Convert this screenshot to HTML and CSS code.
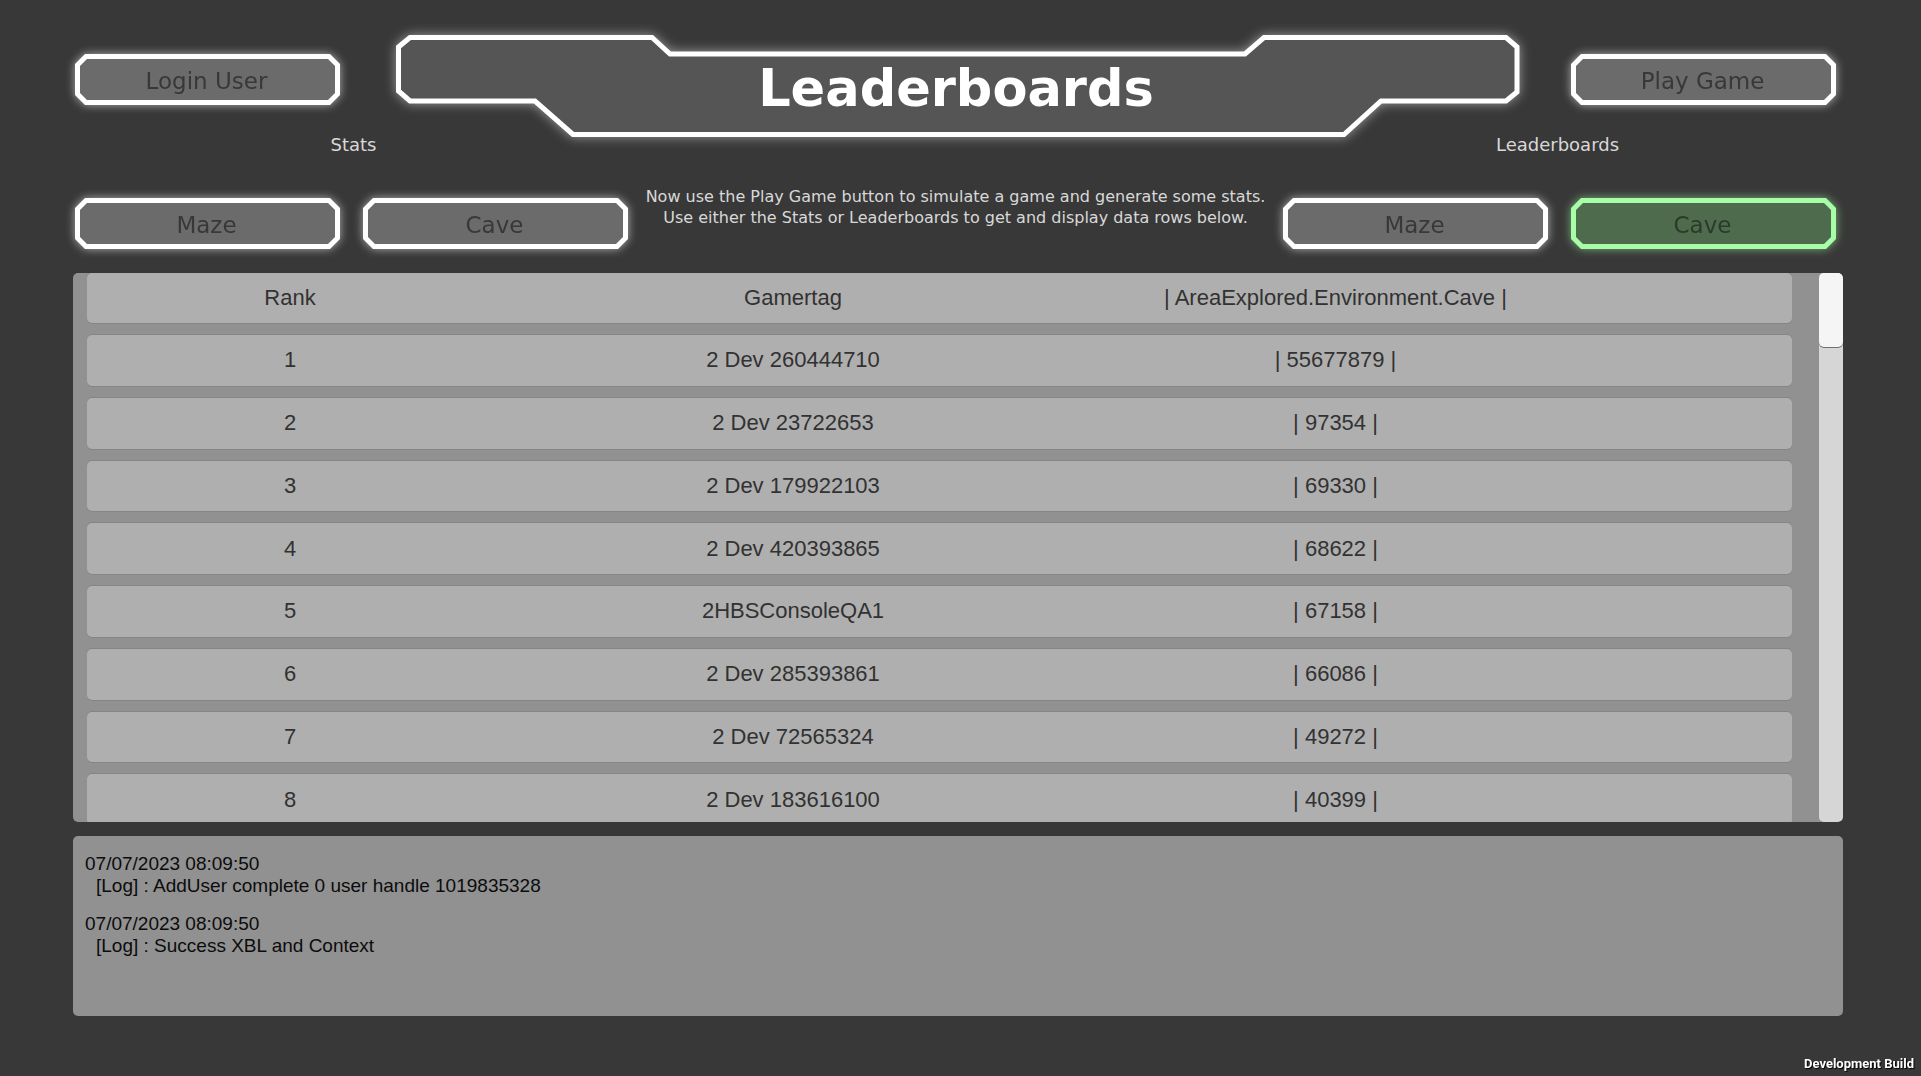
FILE: index.html
```html
<!DOCTYPE html>
<html lang="en">
<head>
<meta charset="utf-8">
<meta name="viewport" content="width=device-width, initial-scale=1">
<title>Leaderboards</title>
<link rel="stylesheet" href="styles.css">
</head>
<body>
<div class="page">
  <header class="top">
    <button class="hud-button" type="button"><span>Login User</span></button>
    <div class="banner">
      <svg class="banner-frame" viewBox="0 0 1124 105" preserveAspectRatio="none" aria-hidden="true">
        <path d="M14 2.500H256L274 19H849L868 2.500H1110L1121 12V57L1110 66H985L948 99.500H177L139 66H14L2.500 56V12Z"/>
      </svg>
      <h1>Leaderboards</h1>
    </div>
    <button class="hud-button" type="button"><span>Play Game</span></button>
  </header>

  <section class="controls">
    <div class="group group-left">
      <h2>Stats</h2>
      <div class="group-buttons">
        <button class="hud-button" type="button"><span>Maze</span></button>
        <button class="hud-button" type="button"><span>Cave</span></button>
      </div>
    </div>
    <p class="message">Now use the Play Game button to simulate a game and generate some stats.<br>Use either the Stats or Leaderboards to get and display data rows below.</p>
    <div class="group group-right">
      <h2>Leaderboards</h2>
      <div class="group-buttons">
        <button class="hud-button" type="button"><span>Maze</span></button>
        <button class="hud-button active" type="button" aria-pressed="true"><span>Cave</span></button>
      </div>
    </div>
  </section>

  <main>
    <section class="board">
      <div class="board-view">
        <table>
          <colgroup><col class="col-rank"><col class="col-tag"><col></colgroup>
          <thead>
            <tr><th scope="col">Rank</th><th scope="col">Gamertag</th><th scope="col">| AreaExplored.Environment.Cave |</th></tr>
          </thead>
          <tbody>
            <tr><td>1</td><td>2 Dev 260444710</td><td>| 55677879 |</td></tr>
            <tr><td>2</td><td>2 Dev 23722653</td><td>| 97354 |</td></tr>
            <tr><td>3</td><td>2 Dev 179922103</td><td>| 69330 |</td></tr>
            <tr><td>4</td><td>2 Dev 420393865</td><td>| 68622 |</td></tr>
            <tr><td>5</td><td>2HBSConsoleQA1</td><td>| 67158 |</td></tr>
            <tr><td>6</td><td>2 Dev 285393861</td><td>| 66086 |</td></tr>
            <tr><td>7</td><td>2 Dev 72565324</td><td>| 49272 |</td></tr>
            <tr><td>8</td><td>2 Dev 183616100</td><td>| 40399 |</td></tr>
          </tbody>
        </table>
      </div>
      <div class="scroll-track"><div class="scroll-thumb"></div></div>
    </section>

    <section class="log">
      <p>07/07/2023 08:09:50</p>
      <p class="entry">[Log] : AddUser complete 0 user handle 1019835328</p>
      <p>07/07/2023 08:09:50</p>
      <p class="entry">[Log] : Success XBL and Context</p>
    </section>
  </main>
</div>
<div class="build">Development Build</div>
</body>
</html>
```
FILE: styles.css
```css
* {
  box-sizing: border-box;
}

body {
  margin: 0;
  min-height: 100vh;
  background: #383838;
  color: #d8d8d8;
  font-family: "DejaVu Sans", Verdana, sans-serif;
  font-size: 18px;
}

h1,
h2,
p {
  margin: 0;
  font-weight: 400;
}

.page {
  padding: 35px 78px 60px 73px;
}

/* Header row */
.top {
  display: flex;
  align-items: flex-start;
  padding: 0 7px 0 2px;
}

.hud-button {
  --line: #ffffff;
  --fill: #6b6b6b;
  --glow: rgba(255, 255, 255, 0.6);
  position: relative;
  isolation: isolate;
  width: 265px;
  height: 51px;
  padding: 3px 2px 0 0;
  border: 0;
  background: none;
  color: #383838;
  font-family: inherit;
  font-size: 23px;
  line-height: 28px;
  filter: drop-shadow(0 0 5px var(--glow));
}

.hud-button::before,
.hud-button::after {
  content: "";
  position: absolute;
  z-index: -1;
  inset: 0;
  background: var(--line);
  clip-path: polygon(10px 0, calc(100% - 10px) 0, 100% 10px, 100% calc(100% - 10px), calc(100% - 10px) 100%, 10px 100%, 0 calc(100% - 10px), 0 10px);
}

.hud-button::after {
  inset: 5px;
  background: var(--fill);
  clip-path: polygon(7px 0, calc(100% - 7px) 0, 100% 7px, 100% calc(100% - 7px), calc(100% - 7px) 100%, 7px 100%, 0 calc(100% - 7px), 0 7px);
}

.hud-button.active {
  --line: #a6ffa6;
  --fill: #4e6b4e;
  --glow: rgba(166, 255, 166, 0.6);
  color: #2b3b2b;
}

.top .hud-button {
  margin-top: 19px;
}

.banner {
  position: relative;
  flex: 1;
  height: 105px;
  margin: 0 51px 0 56px;
}

.banner-frame {
  position: absolute;
  inset: 0;
  width: 100%;
  height: 100%;
  overflow: visible;
  fill: #555555;
  stroke: #ffffff;
  stroke-width: 5;
  filter: drop-shadow(0 0 6px rgba(255, 255, 255, 0.5));
}

.banner h1 {
  position: relative;
  padding: 22px 4px 0 0;
  color: #ffffff;
  font-size: 51px;
  font-weight: 700;
  line-height: 64px;
  text-align: center;
}

/* Stats and leaderboard pickers */
.controls {
  display: grid;
  grid-template-columns: 561px 1fr 561px;
  align-items: end;
  padding-right: 5px;
}

.group h2 {
  margin-top: -7px;
  font-size: 18px;
  line-height: 24px;
  text-align: center;
}

.group-buttons {
  display: flex;
  justify-content: space-between;
  margin-top: 41px;
}

.group-left .group-buttons {
  padding: 0 6px 0 2px;
}

.group-right .group-buttons {
  padding: 0 2px 0 6px;
}

.message {
  align-self: center;
  margin-top: 24px;
  font-size: 16px;
  line-height: 21px;
  text-align: center;
  white-space: nowrap;
}

/* Leaderboard rows */
.board {
  display: flex;
  height: 549px;
  margin-top: 24px;
  overflow: hidden;
  border-radius: 5px;
  background: #919191;
  color: #323232;
  font-family: "Liberation Sans", Arial, sans-serif;
}

.board-view {
  flex: 1;
  padding: 0 27px 0 14px;
}

table {
  width: 100%;
  height: 576px;
  margin-top: -12px;
  border-spacing: 0 12px;
  table-layout: fixed;
  font-size: 22px;
  line-height: 26px;
}

.col-rank {
  width: 406px;
}

.col-tag {
  width: 600px;
}

th,
td {
  padding: 0;
  background: #afafaf;
  box-shadow: 0 1px #858585, 0 -1px #858585;
  font-weight: 400;
  text-align: center;
}

th {
  height: 50px;
}

th:first-child,
td:first-child {
  border-radius: 5px 0 0 5px;
}

th:last-child,
td:last-child {
  padding-right: 214px;
  border-radius: 0 5px 5px 0;
}

.scroll-track {
  width: 24px;
  border-radius: 5px;
  background: #d6d6d6;
}

.scroll-thumb {
  height: 74px;
  border-radius: 5px;
  background: #f5f5f5;
  box-shadow: 0 1px #707070;
}

/* Log panel */
.log {
  min-height: 180px;
  margin-top: 14px;
  padding: 17px 12px;
  border-radius: 5px;
  background: #919191;
  color: #0c0c0c;
  font-family: "Liberation Sans", Arial, sans-serif;
  font-size: 19px;
  line-height: 22px;
}

.log .entry {
  margin-bottom: 16px;
  padding-left: 11px;
}

.build {
  position: fixed;
  right: 7px;
  bottom: 3px;
  color: #ffffff;
  font: 700 13px/18px Roboto, "Open Sans", sans-serif;
  text-shadow: 1px 1px 1px #000000;
}
```
